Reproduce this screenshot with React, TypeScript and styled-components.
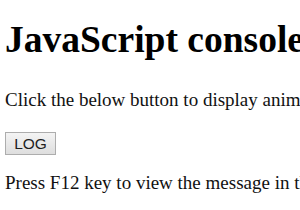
import React from "react";
import styled, { createGlobalStyle } from "styled-components";

const Global = createGlobalStyle`
  html, body { background: #ffffff; }
  body {
    margin: 0;
    padding: 0 0 0 5px;
    font-family: "Liberation Serif", "Times New Roman", serif;
    color: #000;
    overflow: hidden;
  }
`;

const Page = styled.div`
  display: flex;
  flex-direction: column;
  align-items: flex-start;
  padding-top: 19.8px;
  white-space: nowrap;
`;

const Title = styled.h1`
  margin: 0;
  font-size: 37.5px;
  font-weight: bold;
  line-height: 40px;
`;

const Text = styled.p<{ $gap: number }>`
  margin: ${(p) => p.$gap}px 0 0;
  font-size: 19px;
  line-height: 22px;
  color: #111;
`;

const LogButton = styled.button`
  margin-top: 20.4px;
  box-sizing: border-box;
  width: 51px;
  height: 23.5px;
  padding: 0;
  border: 1px solid #adadad;
  border-radius: 0;
  background: linear-gradient(#f4f4f4, #dedede);
  font-family: "Liberation Sans", Arial, sans-serif;
  font-size: 15.5px;
  color: #1e1e1e;
  line-height: 1;
`;

export default function App() {
  return (
    <>
      <Global />
      <Page>
        <Title>JavaScript console.log() Method</Title>
        <Text $gap={29.6}>Click the below button to display animal names in the console</Text>
        <LogButton>LOG</LogButton>
        <Text $gap={17.2}>Press F12 key to view the message in the console</Text>
      </Page>
    </>
  );
}
